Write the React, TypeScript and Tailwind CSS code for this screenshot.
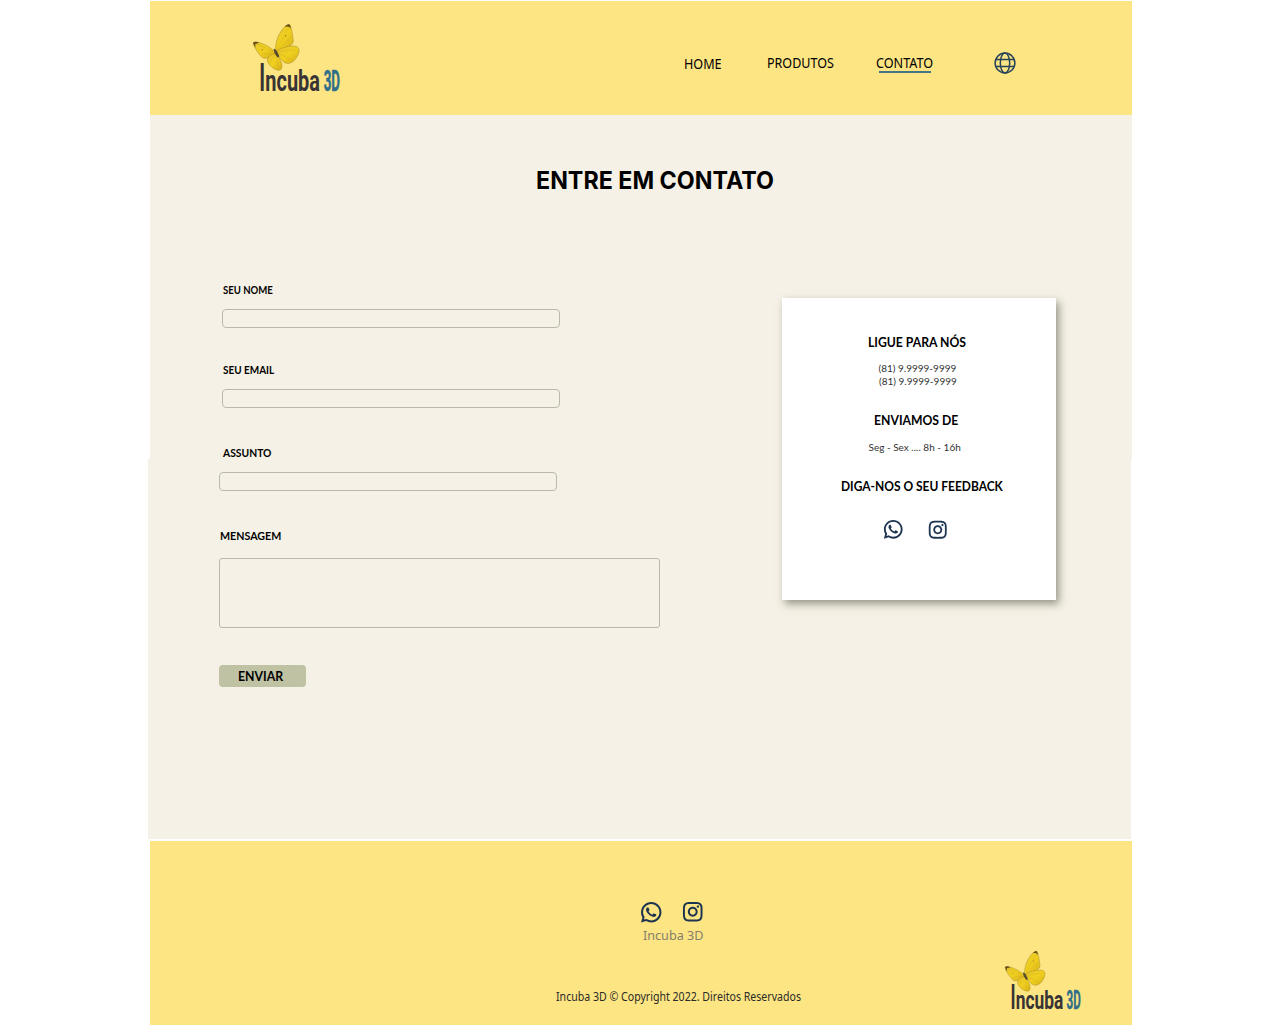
import type { ReactNode } from "react";
import { RiInstagramLine, RiWhatsappLine } from "react-icons/ri";

/* Condensed text: the inner span is squeezed horizontally from its left edge. */
function Condensed({ className, children }: { className: string; children: ReactNode }) {
  return <span className={`inline-block origin-left whitespace-nowrap ${className}`}>{children}</span>;
}

function Logo({ className }: { className: string }) {
  return (
    <svg viewBox="36 24 270 210" className={`overflow-visible ${className}`} aria-label="Incuba 3D">
      <defs>
        <linearGradient id="wing" x1="0" y1="0" x2="1" y2="1">
          <stop offset="0" stopColor="#e6c62f" />
          <stop offset="0.5" stopColor="#f0cf1f" />
          <stop offset="1" stopColor="#d6b016" />
        </linearGradient>
      </defs>
      <g stroke="#a58a2c" strokeWidth="1.5" strokeLinejoin="round">
        <path d="M107 108 C105 88 112 62 128 42 C136 32 145 26 149 29 C154 34 158 60 160 78 C159 89 149 93 138 97 C126 102 115 106 107 108Z" fill="url(#wing)" />
        <path d="M106 112 C92 96 68 84 49 81 C42 80 38 83 40 88 C45 101 56 117 66 127 C76 135 94 125 106 116Z" fill="url(#wing)" />
        <path d="M110 108 C124 98 150 90 168 94 C177 97 179 104 176 114 C171 130 160 142 148 145 C132 148 121 132 111 116Z" fill="url(#wing)" />
        <path d="M106 115 C94 118 82 127 82 135 C84 150 100 164 117 166 C125 166 127 156 125 145 C122 135 114 124 109 116Z" fill="url(#wing)" />
      </g>
      <g fill="none" stroke="#c9a41c" strokeWidth="1">
        <path d="M108 106 L148 38 M109 106 L152 68 M105 112 L48 86 M104 114 L66 118 M112 110 L166 104 M112 112 L153 135 M108 117 L114 160 M107 117 L90 140" />
      </g>
      <path d="M134 36 C141 28 147 25 150 30 L153 42 C148 34 142 33 134 36Z" fill="#65501d" />
      <path d="M39 83 C43 79 51 80 58 83 L46 87 L46 98Z" fill="#65501d" />
      <circle cx="137" cy="62" r="2.2" fill="#a77d1c" />
      <circle cx="67" cy="104" r="2" fill="#a77d1c" />
      <path d="M101 101 C106 101 112 108 118 124 L114 128 C107 122 102 113 101 101Z" fill="#574a2b" />
      <g fontFamily="Roboto, sans-serif" fill="#383436">
        <text transform="translate(58 228) scale(0.5 1)" fontSize="119" fontWeight="700">I</text>
        <text transform="translate(76 228) scale(0.68 1)" fontSize="88" fontWeight="700">ncuba</text>
        <text transform="translate(251 227) scale(0.455 1)" fontSize="88" fontWeight="700" fill="#2f6f8a" stroke="#2f6f8a" strokeWidth="1.5">3D</text>
      </g>
    </svg>
  );
}

function Globe() {
  return (
    <svg viewBox="0 0 22 22" className="size-[22px]" fill="none" stroke="#27435a" strokeWidth="1.5">
      <circle cx="11" cy="11" r="9.9" />
      <ellipse cx="11" cy="11" rx="4.7" ry="9.9" />
      <path d="M1.8 7.6H20.2M1.8 14.4H20.2" />
    </svg>
  );
}

const label = "h-[14px] font-['Lato',sans-serif] text-[11px] leading-[14px] font-bold text-black";
const field = "block h-[19px] w-[338px] rounded-[4px] border border-[#b9b8ab] bg-transparent outline-none";
const cardTitle = "block h-4 font-['Lato',sans-serif] text-[13px] leading-4 font-bold text-black";
const cardText = "block h-[13px] font-['Lato',sans-serif] text-[10px] leading-[13px] text-[#333333]";

export default function App() {
  return (
    <div className="h-[1025px] w-[1281px] overflow-hidden bg-white">
      <header className="mt-px ml-[149.5px] flex h-[114px] w-[982.5px] items-start bg-[#fde584]">
        <Logo className="mt-[22px] ml-[102.5px] h-[70px] w-[90px]" />
        <nav className="ml-[342px] flex items-start pt-[52px] font-['Noto_Sans',sans-serif] text-[14px] leading-5 text-black">
          <a className="mt-px w-[83px]"><Condensed className="scale-x-[0.9]">HOME</Condensed></a>
          <a className="w-[109px]"><Condensed className="scale-x-[0.895]">PRODUTOS</Condensed></a>
          <a className="w-[117px]">
            <Condensed className="scale-x-[0.9]">CONTATO</Condensed>
            <span className="-mt-[2.5px] ml-[2.5px] block h-[2px] w-[52px] bg-[#427685]" />
          </a>
        </nav>
        <div className="mt-[51px] ml-[0.5px]"><Globe /></div>
      </header>

      <main className="relative ml-[148px] h-[724px] w-[984px] bg-[#f5f1e6]">
        <span className="absolute top-0 left-0 h-[344px] w-[1.5px] bg-white" />
        <span className="absolute right-0 bottom-0 h-[379px] w-[1.5px] bg-white" />
        <h1 className="h-[168px] pt-[49.5px] pl-[388px] font-['Inter',sans-serif] text-[24px] leading-8 font-bold text-black">
          <Condensed className="scale-x-[0.969]">ENTRE EM CONTATO</Condensed>
        </h1>

        <div className="flex items-start">
          <form className="ml-[71px] w-[441px]">
            <label className={`${label} block pl-[3.5px]`}><Condensed className="scale-x-[0.87]">SEU NOME</Condensed></label>
            <input className={`${field} mt-3 ml-[3px]`} />
            <label className={`${label} mt-[35px] block pl-[3.5px]`}><Condensed className="scale-x-[0.905]">SEU EMAIL</Condensed></label>
            <input className={`${field} mt-3 ml-[3px]`} />
            <label className={`${label} mt-[38px] block pl-[3.5px]`}><Condensed className="scale-x-[0.94]">ASSUNTO</Condensed></label>
            <input className={`${field} mt-3`} />
            <label className={`${label} mt-[38px] block pl-[0.5px]`}><Condensed className="scale-x-[0.97]">MENSAGEM</Condensed></label>
            <textarea className="mt-[15px] block h-[70px] w-[441px] resize-none rounded-[3px] border border-[#b9b8ab] bg-transparent outline-none" />
            <button type="button" className="mt-[37px] flex h-[22px] w-[87px] items-center rounded-[4px] bg-[#bfc2a3] pb-px pl-[18.5px] font-['Lato',sans-serif] text-[13px] leading-4 font-bold text-black">
              <Condensed className="scale-x-[0.945]">ENVIAR</Condensed>
            </button>
          </form>

          <aside className="mt-[15px] ml-[121.5px] h-[302px] w-[274.5px] bg-white pt-[36px] shadow-[3px_4px_8px_rgba(60,60,45,0.5)]">
            <strong className={`${cardTitle} pl-[86px]`}><Condensed className="scale-x-[0.938]">LIGUE PARA NÓS</Condensed></strong>
            <span className={`${cardText} mt-[12px] pl-[97px]`}>(81) 9.9999-9999</span>
            <span className={`${cardText} pl-[97.5px]`}>(81) 9.9999-9999</span>
            <strong className={`${cardTitle} mt-[24px] pl-[92px]`}><Condensed className="scale-x-[0.938]">ENVIAMOS DE</Condensed></strong>
            <span className={`${cardText} mt-[13px] pl-[87px]`}>Seg - Sex .... 8h - 16h</span>
            <strong className={`${cardTitle} mt-[24px] pl-[59px]`}><Condensed className="scale-x-[0.921]">DIGA-NOS O SEU FEEDBACK</Condensed></strong>
            <div className="mt-[24px] flex items-center gap-[22.5px] pl-[100.5px] text-[#1d3450]">
              <RiWhatsappLine size={22.5} />
              <RiInstagramLine size={21.5} />
            </div>
          </aside>
        </div>
      </main>

      <footer className="mt-[2px] ml-[149.5px] flex h-[184px] w-[982.5px] items-start bg-[#fde584]">
        <div className="ml-[406px] w-[448.5px] pt-[58.5px] font-['Noto_Sans',sans-serif]">
          <div className="flex items-center gap-[17px] pl-[83.5px] text-[#1d3450]">
            <RiWhatsappLine size={24.5} />
            <RiInstagramLine size={23.5} />
          </div>
          <p className="pt-[0.5px] pl-[87.5px] text-[13px] leading-5 text-[#85806c]"><Condensed className="scale-x-[0.97]">Incuba 3D</Condensed></p>
          <p className="mt-[44px] text-[12px] leading-4 text-[#2b2b28]">
            <Condensed className="scale-x-[0.882]">Incuba 3D © Copyright 2022. Direitos Reservados</Condensed>
          </p>
        </div>
        <Logo className="mt-[109px] h-[61px] w-[78.5px]" />
      </footer>
    </div>
  );
}
